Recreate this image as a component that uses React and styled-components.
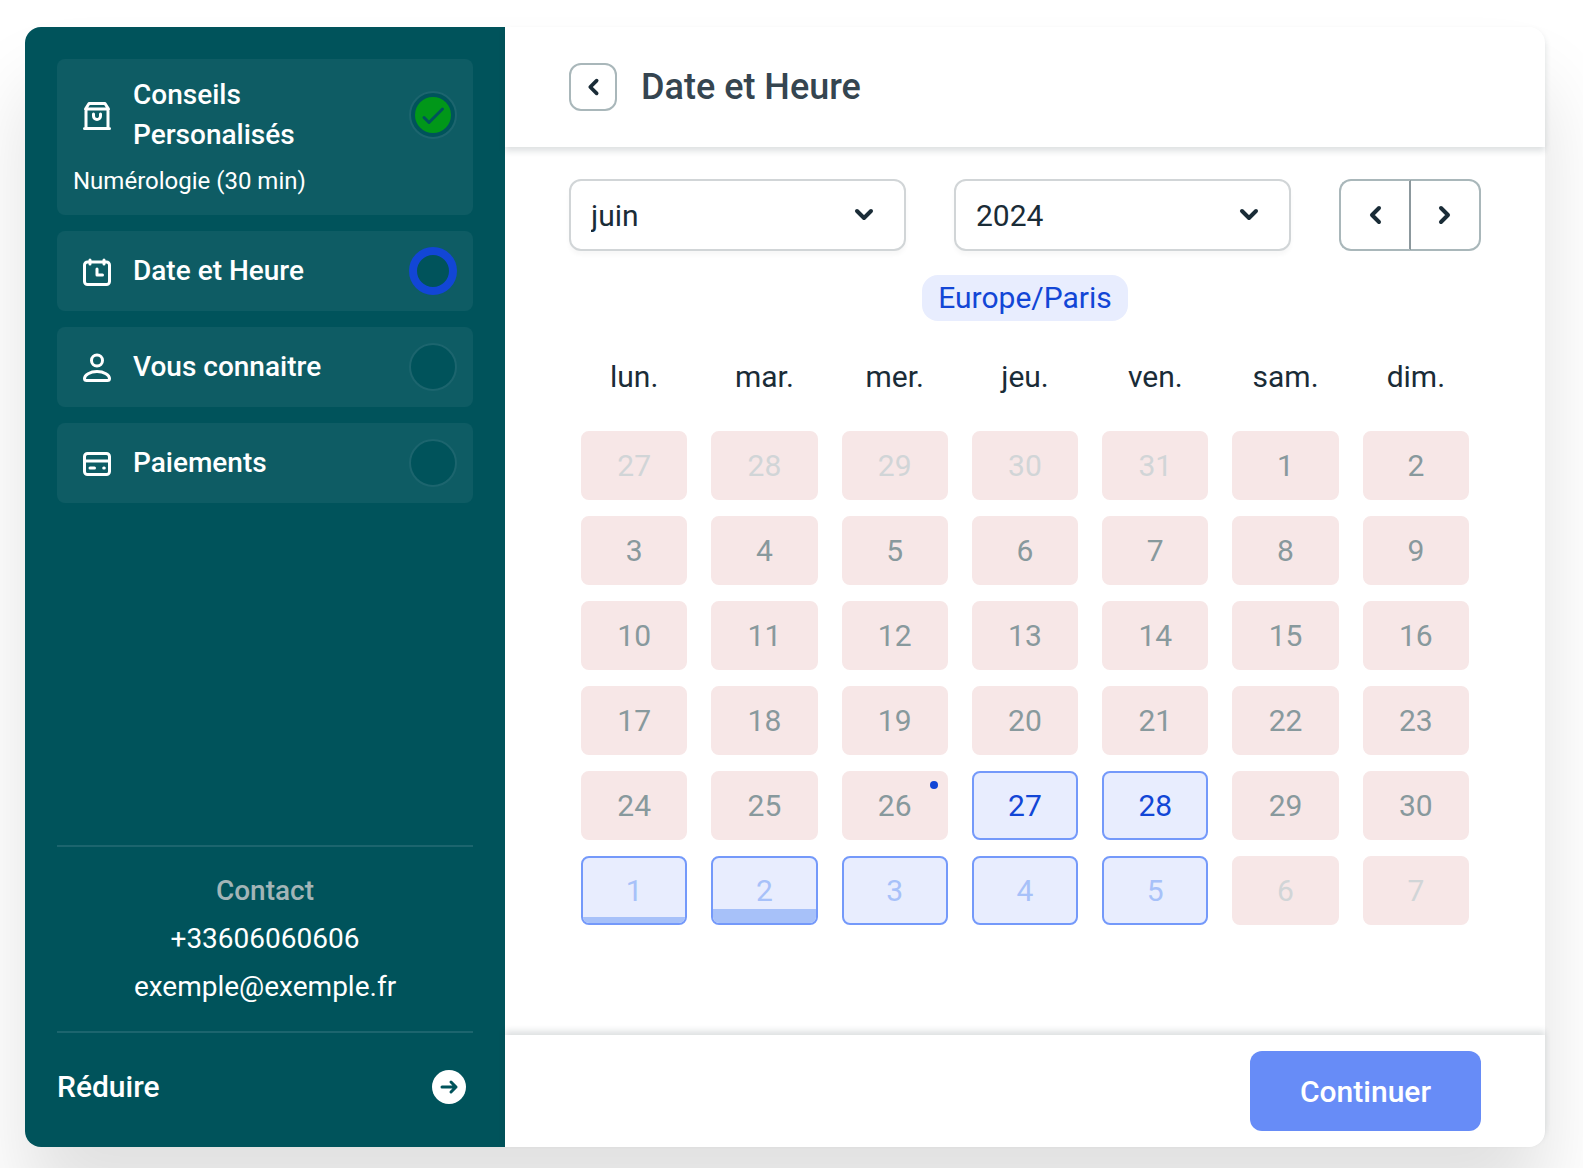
import React, { useState } from "react";
import styled, { createGlobalStyle, css } from "styled-components";

const STEPS = [
    {
        id: "service",
        label: "Conseils Personalisés",
        detail: "Numérologie (30 min)",
        icon: BagIcon,
        status: "done",
    },
    { id: "date", label: "Date et Heure", icon: CalendarIcon, status: "current" },
    { id: "info", label: "Vous connaitre", icon: UserIcon, status: "todo" },
    { id: "payment", label: "Paiements", icon: CardIcon, status: "todo" },
];

const MONTHS = [
    "janvier",
    "février",
    "mars",
    "avril",
    "mai",
    "juin",
    "juillet",
    "août",
    "septembre",
    "octobre",
    "novembre",
    "décembre",
];
const YEARS = ["2024", "2025", "2026"];
const WEEKDAYS = ["lun.", "mar.", "mer.", "jeu.", "ven.", "sam.", "dim."];

// 27 mai -> 7 juillet
const AVAILABLE = ["5-27", "5-28", "6-1", "6-2", "6-3", "6-4", "6-5"];
const BOOKED = { "6-1": 10, "6-2": 22 };
const TODAY = "5-26";

const DAYS = Array.from({ length: 42 }, (_, i) => {
    const date = new Date(2024, 4, 27 + i);
    const key = `${date.getMonth()}-${date.getDate()}`;
    return {
        key,
        day: date.getDate(),
        outside: date.getMonth() !== 5,
        free: AVAILABLE.includes(key),
        booked: BOOKED[key],
        today: key === TODAY,
    };
});
const WEEKS = [0, 1, 2, 3, 4, 5].map((w) => DAYS.slice(w * 7, w * 7 + 7));

function BagIcon() {
    return (
        <StepIcon viewBox="0 0 48 48" aria-hidden="true">
            <path d="M13 18v19.5M35 18v19.5M11.5 37.5h25M12.5 18h23M12.5 18l3.5-5.500h16l3.5 5.500M20.500 23v2a3.5 3.5 0 0 0 7 0v-2" />
        </StepIcon>
    );
}

function CalendarIcon() {
    return (
        <StepIcon viewBox="0 0 48 48" aria-hidden="true">
            <rect x="11.5" y="15" width="25" height="22.5" rx="3" />
            <path d="M17 13v4M31 13v4M24 22v6h5.5" />
        </StepIcon>
    );
}

function UserIcon() {
    return (
        <StepIcon viewBox="0 0 48 48" aria-hidden="true">
            <circle cx="24" cy="17.5" r="5.5" />
            <path d="M24 28.5c-7 0-12.5 3.5-12.5 7 0 1.3.9 2 2.2 2h20.600c1.300 0 2.200-.7 2.200-2 0-3.500-5.500-7-12.5-7z" />
        </StepIcon>
    );
}

function CardIcon() {
    return (
        <StepIcon viewBox="0 0 48 48" aria-hidden="true">
            <rect x="11.5" y="14.5" width="25" height="21" rx="3" />
            <path d="M12 22h24M17 29h4.5M30.7 29h.6" />
        </StepIcon>
    );
}

function Chevron({ direction }) {
    const paths = {
        left: "M28 17l-7 7 7 7",
        right: "M20 17l7 7-7 7",
        down: "M17 20l7 7 7-7",
    };
    return (
        <ChevronSvg viewBox="0 0 48 48" aria-hidden="true">
            <path d={paths[direction]} />
        </ChevronSvg>
    );
}

function Step({ label, detail, icon: Icon, status }) {
    return (
        <StepCard aria-current={status === "current" ? "step" : undefined}>
            <StepRow>
                <Icon />
                <StepLabel>{label}</StepLabel>
                <StepStatus $status={status}>
                    {status === "done" && (
                        <svg viewBox="0 0 36 36" aria-hidden="true">
                            <circle cx="18" cy="18" r="18" />
                            <path d="M9 20.5l5 5L27.5 12" />
                        </svg>
                    )}
                </StepStatus>
            </StepRow>
            {detail && <StepDetail>{detail}</StepDetail>}
        </StepCard>
    );
}

function Dropdown({ label, value, options, onChange }) {
    return (
        <SelectBox>
            <select
                aria-label={label}
                value={value}
                onChange={(e) => onChange(e.target.value)}
            >
                {options.map((option) => (
                    <option key={option}>{option}</option>
                ))}
            </select>
            <Chevron direction="down" />
        </SelectBox>
    );
}

function App() {
    const [month, setMonth] = useState("juin");
    const [year, setYear] = useState("2024");

    return (
        <Page>
            <GlobalStyle />
            <Dialog>
                <Sidebar>
                    <Steps>
                        {STEPS.map((step) => (
                            <Step key={step.id} {...step} />
                        ))}
                    </Steps>
                    <Contact>
                        <ContactTitle>Contact</ContactTitle>
                        <ContactLink href="tel:+33606060606">
                            +33606060606
                        </ContactLink>
                        <ContactLink href="mailto:exemple@exemple.fr">
                            exemple@exemple.fr
                        </ContactLink>
                    </Contact>
                    <Collapse type="button">
                        Réduire
                        <svg viewBox="0 0 48 48" aria-hidden="true">
                            <circle cx="24" cy="24" r="17" />
                            <path d="M17 24h14M26 19l5 5-5 5" />
                        </svg>
                    </Collapse>
                </Sidebar>
                <Main>
                    <Header>
                        <BackButton type="button" aria-label="Retour">
                            <Chevron direction="left" />
                        </BackButton>
                        <h1>Date et Heure</h1>
                    </Header>
                    <Body>
                        <Filters>
                            <Dropdown
                                label="Mois"
                                value={month}
                                options={MONTHS}
                                onChange={setMonth}
                            />
                            <Dropdown
                                label="Année"
                                value={year}
                                options={YEARS}
                                onChange={setYear}
                            />
                            <Pager>
                                <PagerButton
                                    type="button"
                                    aria-label="Mois précédent"
                                >
                                    <Chevron direction="left" />
                                </PagerButton>
                                <PagerButton
                                    type="button"
                                    aria-label="Mois suivant"
                                >
                                    <Chevron direction="right" />
                                </PagerButton>
                            </Pager>
                        </Filters>
                        <TimeZone>Europe/Paris</TimeZone>
                        <Calendar>
                            <thead>
                                <tr>
                                    {WEEKDAYS.map((name) => (
                                        <th key={name} scope="col">
                                            {name}
                                        </th>
                                    ))}
                                </tr>
                            </thead>
                            <tbody>
                                {WEEKS.map((week) => (
                                    <tr key={week[0].key}>
                                        {week.map((d) => (
                                            <td key={d.key}>
                                                <Day
                                                    type="button"
                                                    disabled={!d.free}
                                                    $free={d.free}
                                                    $outside={d.outside}
                                                >
                                                    {d.booked && (
                                                        <Load
                                                            style={{
                                                                height: `${d.booked}%`,
                                                            }}
                                                        />
                                                    )}
                                                    {d.today && <TodayDot />}
                                                    <span>{d.day}</span>
                                                </Day>
                                            </td>
                                        ))}
                                    </tr>
                                ))}
                            </tbody>
                        </Calendar>
                    </Body>
                    <Footer>
                        <ContinueButton type="button">Continuer</ContinueButton>
                    </Footer>
                </Main>
            </Dialog>
        </Page>
    );
}

export default App;

const GlobalStyle = createGlobalStyle`
    * {
        box-sizing: border-box;
    }

    body {
        margin: 0;
        background: #ffffff;
        font-family: Roboto, "Liberation Sans", sans-serif;
    }

    button,
    select {
        font: inherit;
        cursor: pointer;
    }
`;

const Page = styled.div`
    display: flex;
    min-height: 100vh;
    padding: 27px 38px 21px 25px;
`;

const Dialog = styled.div`
    display: flex;
    flex: 1;
    border-radius: 16px;
    background: #ffffff;
    box-shadow: 0 60px 80px rgba(0, 0, 0, 0.12);
`;

const Sidebar = styled.aside`
    display: flex;
    flex-direction: column;
    flex: 0 0 480px;
    padding: 32px 32px 0;
    border-radius: 16px 0 0 16px;
    background: #00535b;
    color: #ffffff;
`;

const Steps = styled.ol`
    display: flex;
    flex-direction: column;
    gap: 16px;
    margin: 0 0 auto;
    padding: 0;
    list-style: none;
`;

const StepCard = styled.li`
    padding: 16px;
    border-radius: 8px;
    background: #0e5c64;
`;

const StepRow = styled.div`
    display: flex;
    align-items: center;
`;

const StepIcon = styled.svg`
    flex: none;
    width: 48px;
    height: 48px;
    margin-right: 12px;
    fill: none;
    stroke: #ffffff;
    stroke-width: 3;
    stroke-linecap: round;
    stroke-linejoin: round;
`;

const StepLabel = styled.span`
    flex: 1;
    padding-right: 60px;
    font-size: 28px;
    font-weight: 500;
    line-height: 40px;
`;

const StepStatus = styled.span`
    display: flex;
    align-items: center;
    justify-content: center;
    flex: none;
    width: 48px;
    height: 48px;
    border: 2px solid #1c656e;
    border-radius: 50%;
    background: #00535b;

    ${({ $status }) =>
        $status === "current" &&
        css`
            border: 8px solid #1246d6;
        `}

    svg {
        width: 36px;
        height: 36px;
    }

    circle {
        fill: #019719;
    }

    path {
        fill: none;
        stroke: #00535b;
        stroke-width: 3;
        stroke-linecap: round;
        stroke-linejoin: round;
    }
`;

const StepDetail = styled.p`
    margin: 8px 0 0;
    font-size: 24px;
    line-height: 36px;
`;

const Contact = styled.div`
    display: flex;
    flex-direction: column;
    align-items: center;
    gap: 8px;
    margin-top: 32px;
    padding: 24px 0;
    border: solid #1c656e;
    border-width: 2px 0;
    font-size: 28px;
    line-height: 40px;
`;

const ContactTitle = styled.span`
    color: #a3b5b7;
    font-weight: 500;
`;

const ContactLink = styled.a`
    color: inherit;
    text-decoration: none;
`;

const Collapse = styled.button`
    display: flex;
    align-items: center;
    justify-content: space-between;
    padding: 30px 0 36px;
    border: none;
    background: none;
    color: inherit;
    font-size: 30px;
    font-weight: 500;
    line-height: 40px;

    svg {
        width: 48px;
        height: 48px;
    }

    circle {
        fill: #ffffff;
    }

    path {
        fill: none;
        stroke: #00535b;
        stroke-width: 3;
        stroke-linecap: round;
        stroke-linejoin: round;
    }
`;

const Main = styled.main`
    display: flex;
    flex-direction: column;
    flex: 1;
    min-width: 0;
    color: #1a2c37;
`;

const Header = styled.header`
    display: flex;
    align-items: center;
    gap: 24px;
    padding: 36px 64px;
    border-radius: 0 16px 0 0;
    box-shadow: 0 4px 6px rgba(26, 44, 55, 0.15);

    h1 {
        margin: 0;
        color: #354550;
        font-size: 36px;
        font-weight: 500;
        line-height: 48px;
    }
`;

const ChevronSvg = styled.svg`
    flex: none;
    width: 48px;
    height: 48px;
    fill: none;
    stroke: #1a2c37;
    stroke-width: 4;
    stroke-linecap: round;
    stroke-linejoin: round;
`;

const BackButton = styled.button`
    display: flex;
    align-items: center;
    justify-content: center;
    width: 48px;
    height: 48px;
    padding: 0;
    border: 2px solid #a9b7ba;
    border-radius: 12px;
    background: #ffffff;

    svg {
        width: 44px;
        height: 44px;
    }
`;

const Body = styled.section`
    display: flex;
    flex-direction: column;
    flex: 1;
    padding: 32px 64px;
`;

const Filters = styled.div`
    display: flex;
    gap: 48px;
`;

const SelectBox = styled.div`
    display: grid;
    flex: 1;
    align-items: center;
    min-width: 0;

    select,
    svg {
        grid-area: 1 / 1;
    }

    select {
        appearance: none;
        width: 100%;
        height: 72px;
        padding: 0 64px 0 20px;
        border: 2px solid #d1d5d7;
        border-radius: 12px;
        background: #ffffff;
        color: #1a2c37;
        font-size: 30px;
        box-shadow: 0 4px 4px rgba(14, 25, 32, 0.03);
    }

    svg {
        justify-self: end;
        margin-right: 18px;
        pointer-events: none;
    }
`;

const Pager = styled.div`
    display: flex;
`;

const PagerButton = styled.button`
    display: flex;
    align-items: center;
    justify-content: center;
    width: 72px;
    height: 72px;
    padding: 0;
    border: 2px solid #a9b7ba;
    background: #ffffff;

    &:first-child {
        border-right-color: #8c989d;
        border-radius: 12px 0 0 12px;
    }

    &:last-child {
        width: 70px;
        border-left: none;
        border-radius: 0 12px 12px 0;
    }
`;

const TimeZone = styled.span`
    align-self: center;
    margin-top: 24px;
    padding: 0 16px;
    border-radius: 16px;
    background: #e8edfe;
    color: #1246d6;
    font-size: 30px;
    line-height: 46px;
`;

const Calendar = styled.table`
    width: 100%;
    margin-top: 24px;
    border-collapse: collapse;
    table-layout: fixed;
    font-size: 30px;
    line-height: 40px;

    th {
        padding: 12px 0 26px;
        font-weight: 400;
    }

    td {
        padding: 8px 12px;
    }
`;

const Day = styled.button`
    position: relative;
    display: block;
    width: 100%;
    height: 69px;
    padding: 0;
    border: 2px solid ${({ $free }) => ($free ? "#7499fa" : "#f7e7e7")};
    border-radius: 8px;
    background: ${({ $free }) => ($free ? "#e8edfe" : "#f7e7e7")};
    overflow: hidden;
    color: ${({ $free, $outside }) => {
        if ($free) return $outside ? "#a7c1f9" : "#1246d6";
        return $outside ? "#d1d5d7" : "#88999d";
    }};

    span {
        position: relative;
    }
`;

const Load = styled.i`
    position: absolute;
    right: 0;
    bottom: 0;
    left: 0;
    background: #a7c1f9;
`;

const TodayDot = styled.i`
    position: absolute;
    top: 8px;
    right: 8px;
    width: 8px;
    height: 8px;
    border-radius: 50%;
    background: #1246d6;
`;

const Footer = styled.footer`
    display: flex;
    justify-content: flex-end;
    padding: 16px 64px;
    border-radius: 0 0 16px 0;
    box-shadow: 0 -4px 6px rgba(26, 44, 55, 0.15);
`;

const ContinueButton = styled.button`
    height: 80px;
    padding: 0 50px;
    border: none;
    border-radius: 12px;
    background: #678cf7;
    color: #ffffff;
    font-size: 30px;
    font-weight: 500;
`;
